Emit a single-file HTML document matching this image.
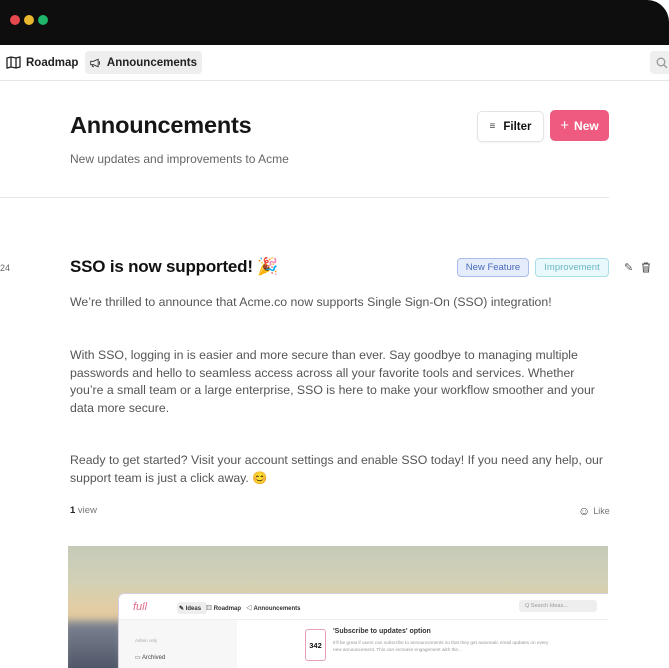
<!DOCTYPE html>
<html><head><meta charset="utf-8"><style>
*{box-sizing:border-box;margin:0;padding:0}
body{width:669px;height:668px;overflow:hidden;background:#fff;font-family:"Liberation Sans","Noto Sans CJK JP",sans-serif;color:#111;position:relative}
.top{position:absolute;left:0;top:0;width:669px;height:45px;background:#0e0e0e;border-top-right-radius:22px}
.dot{position:absolute;top:15px;width:10px;height:10px;border-radius:50%}
.nav{position:absolute;top:45px;left:0;width:669px;height:36px;border-bottom:1px solid #e6e6e6;background:#fff}
.ni{position:absolute;top:6px;height:23px;font-size:11.5px;font-weight:bold;color:#222;display:flex;align-items:center;gap:5px;padding:0 5px;border-radius:4px}
.a{position:absolute}
p.t{position:absolute;left:70px;font-size:12.3px;line-height:17.5px;color:#555;white-space:nowrap}
.tag{position:absolute;top:258px;height:19px;font-size:9.5px;border-radius:4px;display:flex;align-items:center;justify-content:center}
</style></head><body>
<div class="top"></div>
<div class="dot" style="left:10px;background:#e5484d"></div>
<div class="dot" style="left:24px;background:#e8b730"></div>
<div class="dot" style="left:38px;background:#1fb56b"></div>
<div class="nav">
 <div class="ni" style="left:1px"><svg width="15" height="13" viewBox="0 0 15 13" fill="none" stroke="#222" stroke-width="1.3"><path d="M1 2l4-1 5 1 4-1v10l-4 1-5-1-4 1z M5 1v10 M10 2v10"/></svg>Roadmap</div>
 <div class="ni" style="left:85px;width:117px;background:#eeeeef;gap:6px"><svg width="17" height="14" viewBox="0 0 16 13" fill="none" stroke="#222" stroke-width="1.2"><path d="M1 4h4l7-3v11L5 9H1z M3 9l1 3h2 M14 4v5"/></svg>Announcements</div>
 <div style="position:absolute;left:650px;top:6px;width:24px;height:23px;background:#efefef;border-radius:4px"><svg width="12" height="12" viewBox="0 0 12 12" style="position:absolute;left:6px;top:6px" fill="none" stroke="#999" stroke-width="1.3"><circle cx="5" cy="5" r="3.8"/><path d="M8 8l3 3"/></svg></div>
</div>
<div class="a" style="left:70px;top:112px;font-size:23.5px;font-weight:bold;color:#161616;letter-spacing:-0.2px">Announcements</div>
<div class="a" style="left:70px;top:152px;font-size:12px;color:#666">New updates and improvements to Acme</div>
<div class="a" style="left:477px;top:111px;width:67px;height:31px;border:1px solid #e3e3e3;border-radius:5px;font-size:11.5px;font-weight:bold;display:flex;align-items:center;justify-content:center;gap:8px;box-shadow:0 1px 2px rgba(0,0,0,.05)"><span style="font-size:10px;color:#444">≡</span>Filter</div>
<div class="a" style="left:550px;top:110px;width:59px;height:31px;background:#ee5a80;border-radius:5px;color:#fff;font-size:12px;font-weight:bold;display:flex;align-items:center;justify-content:center;gap:5px"><span style="font-weight:normal;font-size:15px">+</span>New</div>
<div class="a" style="left:0;top:197px;width:609px;height:1px;background:#e6e6e6"></div>
<div class="a" style="left:0;top:263px;font-size:9px;color:#666">24</div>
<div class="a" style="left:70px;top:257px;font-size:17px;font-weight:bold;color:#111;letter-spacing:-0.2px">SSO is now supported! 🎉</div>
<div class="tag" style="left:457px;width:72px;background:#e5ecfb;border:1px solid #a9bde8;color:#4a6bb8">New Feature</div>
<div class="tag" style="left:535px;width:74px;background:#e9f8fa;border:1px solid #a8dfe6;color:#69b8c4">Improvement</div>
<div class="a" style="left:624px;top:261px;font-size:11px;color:#555">✎</div>
<svg class="a" style="left:641px;top:262px" width="10" height="11" viewBox="0 0 10 11" fill="none" stroke="#555" stroke-width="1"><path d="M1 2h8 M3.5 2V1h3v1 M2 2l.5 8h5L8 2 M4 4v5 M6 4v5"/></svg>
<p class="t" style="top:294px">We’re thrilled to announce that Acme.co now supports Single Sign-On (SSO) integration!</p>
<p class="t" style="top:347px">With SSO, logging in is easier and more secure than ever. Say goodbye to managing multiple<br>passwords and hello to seamless access across all your favorite tools and services. Whether<br>you’re a small team or a large enterprise, SSO is here to make your workflow smoother and your<br>data more secure.</p>
<p class="t" style="top:452px">Ready to get started? Visit your account settings and enable SSO today! If you need any help, our<br>support team is just a click away. 😊</p>
<div class="a" style="left:70px;top:505px;font-size:9.5px;color:#777"><b style="color:#222">1</b> view</div>
<div class="a" style="left:578px;top:504px;font-size:9px;color:#777;display:flex;gap:3px;align-items:center"><span style="font-size:12px;color:#444">☺</span>Like</div>
<div class="a" style="left:68px;top:546px;width:540px;height:122px;overflow:hidden;background:linear-gradient(180deg,#c5cbb9 0%,#d3d1b5 30%,#e2cda4 50%,#e4c89d 65%,#cfc3ab 100%)">
 <div class="a" style="left:-5px;top:75px;width:60px;height:60px;background:linear-gradient(180deg,#7d8594,#434a5b);filter:blur(4px)"></div>
 <div class="a" style="left:50px;top:47px;width:500px;height:90px;background:#fff;border-radius:6px;border:1px solid #d5cfe3">
  <div class="a" style="left:14px;top:7px;font-size:11px;color:#e06a8a;font-style:italic">full</div>
  <div class="a" style="left:58px;top:8px;width:30px;height:12px;background:#eee;border-radius:3px"></div>
  <div class="a" style="left:60px;top:9px;font-size:6px;font-weight:bold;color:#333;white-space:nowrap">✎ Ideas &nbsp; ▥ Roadmap &nbsp; ◁ Announcements</div>
  <div class="a" style="left:400px;top:6px;width:78px;height:12px;background:#eee;border-radius:3px;font-size:5.5px;color:#999;padding:3px 6px">Q Search Ideas...</div>
  <div class="a" style="left:0;top:25px;width:500px;height:1px;background:#eee"></div>
  <div class="a" style="left:0;top:26px;width:118px;height:70px;background:#f7f7f8"></div>
  <div class="a" style="left:16px;top:44px;font-size:4.5px;color:#aaa">Admin only</div>
  <div class="a" style="left:16px;top:60px;font-size:6px;color:#444">▭ Archived</div>
  <div class="a" style="left:186px;top:35px;width:21px;height:32px;border:1px solid #e8a0b4;border-radius:3px;font-size:7.5px;font-weight:bold;text-align:center;padding-top:11px">342</div>
  <div class="a" style="left:214px;top:34px;font-size:7px;font-weight:bold;color:#333">'Subscribe to updates' option</div>
  <div class="a" style="left:214px;top:45px;width:220px;font-size:4.7px;line-height:7px;color:#999">It'll be great if users can subscribe to announcements so that they get automatic email updates on every new announcement. This can increase engagement with the...</div>
 </div>
</div>
</body></html>
